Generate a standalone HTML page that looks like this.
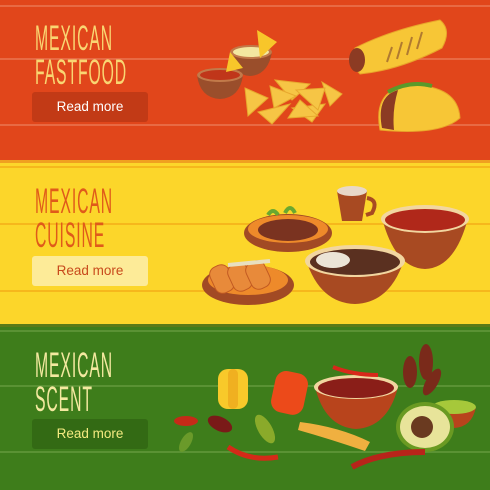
<!DOCTYPE html>
<html><head><meta charset="utf-8"><style>
*{margin:0;padding:0}
body{width:490px;height:490px;overflow:hidden;position:relative;font-family:"Liberation Sans",sans-serif}
.band{position:absolute;left:0;width:490px;overflow:hidden}
.t{position:absolute;left:35px;font-size:35px;line-height:34px;transform:scaleX(0.45);transform-origin:0 0;letter-spacing:2px;white-space:nowrap}
.btn{position:absolute;left:32px;width:116px;height:30px;border-radius:3px;font-size:13.5px;line-height:30px;text-align:center}
svg{position:absolute;left:0;top:0}
</style></head><body>
<div class="band" style="top:0;height:163px;background:#e1461b">
<svg width="490" height="163">
<rect y="5" width="490" height="2" fill="#e86a44"/>
<rect y="58" width="490" height="2" fill="#e86a44"/>
<rect y="124" width="490" height="2" fill="#e86a44"/>
<rect y="160" width="490" height="3" fill="#f0a020"/>
<!-- salsa bowls -->
<path d="M230 52 Q232 75 250 76 Q268 75 272 52z" fill="#9a4e2b"/>
<ellipse cx="251" cy="52" rx="21" ry="7" fill="#c27a4a"/>
<ellipse cx="251" cy="52" rx="18" ry="5" fill="#f3e7a0"/>
<path d="M197 75 Q200 98 220 99 Q240 98 243 75z" fill="#9a4e2b"/>
<ellipse cx="220" cy="75" rx="23" ry="7" fill="#c27a4a"/>
<ellipse cx="220" cy="75" rx="20" ry="5" fill="#c0361a"/>
<path d="M257 30 L277 42 L260 58z" fill="#f8c62a"/>
<path d="M230 52 L243 68 L226 72z" fill="#f8c62a"/>
<!-- chips -->
<g fill="#f6c545" stroke="#e8a92e" stroke-width="1">
<path d="M245 88 L268 98 L248 116z"/><path d="M258 112 L290 104 L272 124z"/>
<path d="M275 80 L310 84 L292 100z"/><path d="M292 108 L325 104 L312 122z"/>
<path d="M322 82 L342 94 L330 106z"/><path d="M270 86 L296 96 L274 108z"/>
<path d="M296 90 L325 88 L318 110z"/><path d="M300 100 L318 116 L288 118z"/>
</g>
<!-- burrito -->
<path d="M355 48 Q390 30 440 20 Q452 30 442 48 Q400 70 360 74 Q348 62 355 48z" fill="#f7c636" stroke="#e8a42a"/>
<ellipse cx="357" cy="60" rx="8" ry="12" fill="#8c3b23"/>
<g stroke="#b07a30" stroke-width="2"><path d="M392 47 l-5 15"/><path d="M402 42 l-5 17"/><path d="M412 37 l-5 18"/><path d="M422 32 l-5 17"/></g>
<!-- taco -->
<path d="M380 130 Q372 88 412 85 Q458 86 460 118 Q440 136 380 130z" fill="#f7c636" stroke="#e8a42a"/>
<path d="M382 128 Q376 96 398 90 Q392 110 394 130z" fill="#8c3b23"/>
<path d="M388 92 Q410 80 432 86" stroke="#5a9a2a" stroke-width="4" fill="none"/>
</svg>
<div class="t" style="top:22px;color:#f9d672">MEXICAN<br>FASTFOOD</div>
<div class="btn" style="top:92px;background:#c23a16;color:#fff">Read more</div>
</div>
<div class="band" style="top:163px;height:164px;background:#fcd62a">
<svg width="490" height="164">
<rect y="3" width="490" height="2" fill="#f6b71c"/>
<rect y="60" width="490" height="2" fill="#f6b71c"/>
<rect y="127" width="490" height="2" fill="#f6b71c"/>
<rect y="161" width="490" height="3" fill="#5a7a18"/>
<!-- steak plate -->
<ellipse cx="288" cy="70" rx="44" ry="19" fill="#a24a24"/>
<ellipse cx="288" cy="66" rx="40" ry="14" fill="#ee8a2a"/>
<ellipse cx="288" cy="67" rx="30" ry="11" fill="#7a3320"/>
<path d="M268 52 q5 -8 10 0 M285 50 q5 -10 10 0" stroke="#6aa830" stroke-width="4" fill="none"/>
<!-- cup -->
<path d="M337 28 L367 28 L362 58 L342 58z" fill="#a84a22"/>
<ellipse cx="352" cy="28" rx="15" ry="5" fill="#e8d8c8"/>
<path d="M367 35 q12 2 5 15 l-6 2" stroke="#a84a22" stroke-width="4" fill="none"/>
<!-- soup bowl -->
<path d="M382 55 Q395 105 425 106 Q455 105 468 55z" fill="#a84a22"/>
<ellipse cx="425" cy="56" rx="44" ry="14" fill="#f2d6a0"/>
<ellipse cx="425" cy="57" rx="40" ry="11" fill="#b0281a"/>
<!-- enchilada plate -->
<ellipse cx="248" cy="122" rx="46" ry="20" fill="#a24a24"/>
<ellipse cx="248" cy="117" rx="40" ry="15" fill="#ee8a2a"/>
<g fill="#e88a3a" stroke="#c25a22"><rect x="212" y="102" width="20" height="28" rx="8" transform="rotate(-25 222 116)"/><rect x="230" y="100" width="20" height="28" rx="8" transform="rotate(-25 240 114)"/><rect x="248" y="98" width="20" height="28" rx="8" transform="rotate(-25 258 112)"/></g>
<path d="M228 102 l42 -4" stroke="#e8e0c0" stroke-width="4"/>
<!-- rice bowl -->
<path d="M306 97 Q320 140 355 141 Q390 140 404 97z" fill="#a84a22"/>
<ellipse cx="355" cy="98" rx="50" ry="16" fill="#f2d6a0"/>
<ellipse cx="355" cy="99" rx="45" ry="13" fill="#5a3020"/>
<ellipse cx="333" cy="97" rx="17" ry="8" fill="#ece4d6"/>
</svg>
<div class="t" style="top:22px;color:#e05a1a">MEXICAN<br>CUISINE</div>
<div class="btn" style="top:93px;background:#fdeb98;color:#c84a1c">Read more</div>
</div>
<div class="band" style="top:327px;height:163px;background:#3e7d1b">
<svg width="490" height="163">
<rect y="3" width="490" height="2" fill="#5a9234"/>
<rect y="58" width="490" height="2" fill="#5a9234"/>
<rect y="124" width="490" height="2" fill="#5a9234"/>
<rect x="218" y="42" width="30" height="40" rx="10" fill="#f8c92a"/>
<rect x="228" y="42" width="10" height="40" rx="5" fill="#f0b020"/>
<rect x="273" y="45" width="33" height="42" rx="11" fill="#ec4a1a" transform="rotate(12 290 66)"/>
<path d="M315 60 Q325 100 356 102 Q388 100 398 60z" fill="#b8441c"/>
<ellipse cx="356" cy="60" rx="42" ry="12" fill="#f2d6a0"/>
<ellipse cx="356" cy="61" rx="38" ry="10" fill="#8a1e18"/>
<path d="M333 40 q20 8 45 8" stroke="#d8281a" stroke-width="4" fill="none"/>
<g fill="#7a2a1a"><ellipse cx="410" cy="45" rx="7" ry="16"/><ellipse cx="426" cy="35" rx="7" ry="18"/><ellipse cx="432" cy="55" rx="6" ry="15" transform="rotate(30 432 55)"/></g>
<path d="M432 80 Q436 100 454 101 Q472 100 476 80z" fill="#b8441c"/><ellipse cx="454" cy="80" rx="22" ry="7" fill="#a6c83a"/>
<ellipse cx="425" cy="100" rx="29" ry="25" fill="#6a9a22"/><ellipse cx="425" cy="100" rx="25" ry="21" fill="#e8e49a"/>
<circle cx="422" cy="100" r="11" fill="#6a3a20"/>
<path d="M300 95 Q340 100 370 115 L365 124 Q330 112 298 103z" fill="#f0b040"/>
<ellipse cx="186" cy="94" rx="12" ry="5" fill="#c62a18"/>
<ellipse cx="220" cy="97" rx="13" ry="7" fill="#7a1a18" transform="rotate(25 220 97)"/>
<ellipse cx="265" cy="102" rx="7" ry="16" fill="#8aaa2a" transform="rotate(-30 265 102)"/>
<ellipse cx="186" cy="115" rx="5" ry="11" fill="#6a9a2a" transform="rotate(30 186 115)"/>
<path d="M228 120 Q250 135 278 130" stroke="#d42a18" stroke-width="5" fill="none"/>
<path d="M352 140 Q380 125 425 125" stroke="#b8241a" stroke-width="6" fill="none"/>
</svg>
<div class="t" style="top:22px;color:#f4e9a0">MEXICAN<br>SCENT</div>
<div class="btn" style="top:92px;background:#336a14;color:#f4ea80">Read more</div>
</div>
</body></html>
